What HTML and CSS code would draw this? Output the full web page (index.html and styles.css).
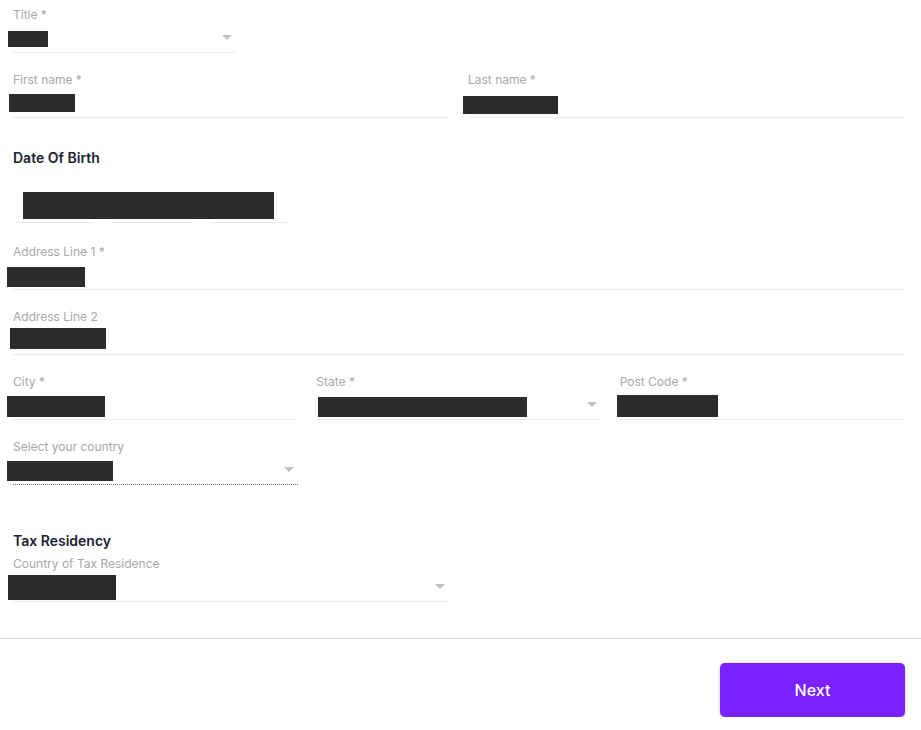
FILE: index.html
```html
<!DOCTYPE html>
<html lang="en">
<head>
<meta charset="utf-8">
<title>Personal details</title>
<link rel="stylesheet" href="styles.css">
</head>
<body>
<main class="form">
  <div class="field title-field">
    <label class="label">Title *</label>
    <div class="control select">
      <span class="redact" style="margin-left:-5px;margin-top:9px;width:40px;height:16px"></span>
      <span class="arrow"></span>
    </div>
  </div>

  <div class="row two gap-18">
    <div class="field">
      <label class="label">First name *</label>
      <div class="control">
        <span class="redact" style="margin-left:-4px;margin-top:7px;width:66px;height:18px"></span>
      </div>
    </div>
    <div class="field">
      <label class="label">Last name *</label>
      <div class="control">
        <span class="redact" style="margin-left:-5px;margin-top:9px;width:95px;height:18px"></span>
      </div>
    </div>
  </div>

  <h3 class="section-title dob-title">Date Of Birth</h3>
  <div class="dob">
    <div class="dob-cell"></div>
    <div class="dob-cell"></div>
    <div class="dob-cell"></div>
    <span class="redact dob-redact"></span>
  </div>

  <div class="field gap-20">
    <label class="label">Address Line 1 *</label>
    <div class="control">
      <span class="redact" style="margin-left:-6px;margin-top:8px;width:78px;height:20px"></span>
    </div>
  </div>

  <div class="field gap-18">
    <label class="label">Address Line 2</label>
    <div class="control">
      <span class="redact" style="margin-left:-3px;margin-top:4px;width:96px;height:21px"></span>
    </div>
  </div>

  <div class="row three gap-18">
    <div class="field">
      <label class="label">City *</label>
      <div class="control">
        <span class="redact" style="margin-left:-6px;margin-top:7px;width:98px;height:21px"></span>
      </div>
    </div>
    <div class="field">
      <label class="label">State *</label>
      <div class="control select">
        <span class="redact" style="margin-left:2px;margin-top:8px;width:209px;height:20px"></span>
        <span class="arrow"></span>
      </div>
    </div>
    <div class="field">
      <label class="label">Post Code *</label>
      <div class="control">
        <span class="redact" style="margin-left:-3px;margin-top:6px;width:101px;height:22px"></span>
      </div>
    </div>
  </div>

  <div class="field country-field gap-18">
    <label class="label">Select your country</label>
    <div class="control select dotted">
      <span class="redact" style="margin-left:-6px;margin-top:7px;width:106px;height:20px"></span>
      <span class="arrow"></span>
    </div>
  </div>

  <h3 class="section-title tax-title">Tax Residency</h3>
  <div class="field tax-field">
    <label class="label">Country of Tax Residence</label>
    <div class="control select">
      <span class="redact" style="margin-left:-5px;margin-top:4px;width:108px;height:25px"></span>
      <span class="arrow"></span>
    </div>
  </div>
</main>

<div class="divider"></div>

<footer class="actions">
  <button class="btn-next" type="button">Next</button>
</footer>
</body>
</html>
```

FILE: styles.css
```css
* { box-sizing: border-box; }

html, body {
  margin: 0;
  padding: 0;
  background: #ffffff;
  font-family: Inter, "Noto Sans", "Liberation Sans", sans-serif;
}

.form {
  padding: 6px 17px 0 13px;
}

.field {
  display: flex;
  flex-direction: column;
  min-width: 0;
}

.label {
  font-size: 12px;
  line-height: 18px;
  color: #a8a8a8;
  height: 16px;
  white-space: nowrap;
}

.control {
  height: 31px;
  display: flex;
  align-items: flex-start;
  border-bottom: 1px solid #ebebeb;
}

.control.select {
  padding-right: 4px;
}

.control.dotted {
  border-bottom: 1px dotted #6f6f6f;
}

.redact {
  display: block;
  background: #2b2b2b;
  flex: none;
}

.arrow {
  margin-left: auto;
  align-self: center;
  width: 0;
  height: 0;
  border-left: 5px solid transparent;
  border-right: 5px solid transparent;
  border-top: 5px solid #c2c2c2;
  margin-top: 1px;
}

.title-field { width: 223px; }
.country-field { width: 285px; }
.tax-field { width: 436px; margin-top: 5px; }

.row {
  display: grid;
  column-gap: 19px;
}
.row.two { grid-template-columns: 1fr 1fr; }
.row.three { grid-template-columns: 1fr 1fr 1fr; }

.gap-18 { margin-top: 18px; }
.gap-20 { margin-top: 20px; }

.section-title {
  margin: 0;
  font-size: 14px;
  line-height: 18px;
  font-weight: 600;
  color: #1d2230;
}
.dob-title { margin-top: 31px; }
.tax-title { margin-top: 47px; }

.dob {
  position: relative;
  display: flex;
  gap: 18px;
  margin-top: 25px;
  padding-left: 1px;
}
.dob-cell {
  width: 80px;
  height: 31px;
  border-bottom: 1px solid #ebebeb;
}
.dob-redact {
  position: absolute;
  left: 10px;
  top: 0;
  width: 251px;
  height: 27px;
}

.divider {
  margin-top: 36px;
  height: 1px;
  background: #dcdcdc;
}

.actions {
  display: flex;
  justify-content: flex-end;
  padding: 24px 16px 0 0;
}

.btn-next {
  width: 185px;
  height: 54px;
  border: none;
  border-radius: 5px;
  background: #7b21ff;
  color: #ffffff;
  font-family: Inter, "Noto Sans", "Liberation Sans", sans-serif;
  font-size: 16px;
  font-weight: 500;
  box-shadow: 0 1px 3px rgba(0, 0, 0, 0.25);
  cursor: pointer;
}
```
